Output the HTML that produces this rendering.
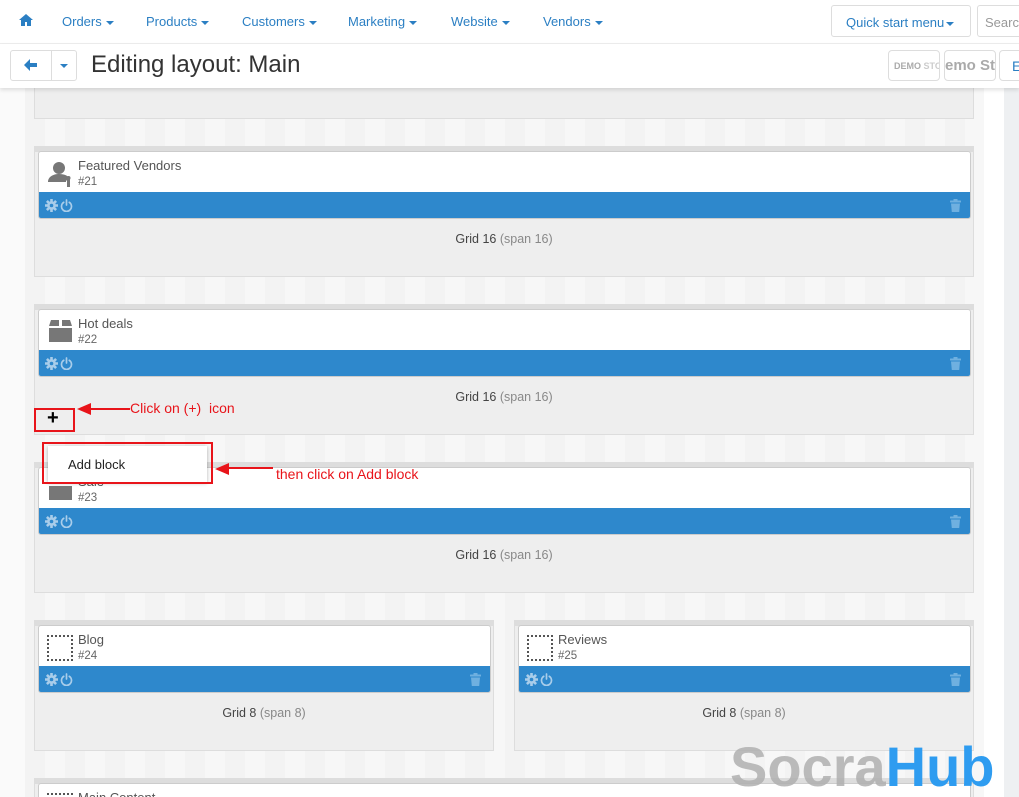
<!DOCTYPE html>
<html><head><meta charset="utf-8"><style>
*{box-sizing:border-box;margin:0;padding:0}
html,body{width:1019px;height:797px;overflow:hidden}
body{background:#fff;font-family:"Liberation Sans",sans-serif;position:relative}
.abs{position:absolute}
.nav{top:0;left:0;width:1019px;height:44px;background:#fff;border-bottom:1px solid #eee}
.nav span{position:absolute;top:14px;font-size:13px;color:#2b7fc3}
.car{display:inline-block;border-left:4px solid transparent;border-right:4px solid transparent;border-top:4px solid #2b7fc3;vertical-align:middle;margin-left:4px}
.bar2{top:44px;left:0;width:1019px;height:44px;background:#fff;box-shadow:0 2px 4px rgba(0,0,0,.12);z-index:3}
.content{top:88px;left:25px;width:959px;height:709px;background:repeating-linear-gradient(90deg,#f3f3f3 0 20px,#f7f7f7 20px 40px)}
.rgray{top:88px;left:1004px;width:15px;height:709px;background:#eef0f2}
.lgray{top:88px;left:0;width:25px;height:709px;background:#fafafa}
.cont{background:#eee;border:1px solid #ddd;border-top:6px solid #ddd}
.blk{background:#fff;border:1px solid #ccc;border-radius:3px;overflow:hidden}
.blk .t{position:absolute;left:39px;top:6px;font-size:13px;color:#555}
.blk .n{position:absolute;left:39px;top:24px;font-size:11.5px;color:#666}
.blue{position:absolute;left:0;right:0;bottom:0;height:26px;background:#2e88cc}
.grid{position:absolute;width:100%;text-align:center;font-size:12.5px;color:#444}
.grid i{font-style:normal;color:#888}
.red{border:2px solid #e8141a;position:absolute}
.ann{color:#e8141a;font-size:14px;position:absolute}
.ic{position:absolute}
</style></head><body>
<svg width="0" height="0" style="position:absolute"><defs>
<g id="gear"><circle cx="6.5" cy="6.5" r="4.3" fill="#a9cdea"/><g stroke="#a9cdea" stroke-width="2.6"><path d="M6.5 0v13M0 6.5h13M1.9 1.9l9.2 9.2M11.1 1.9l-9.2 9.2"/></g><circle cx="6.5" cy="6.5" r="1.8" fill="#2e88cc"/></g>
<g id="pow" fill="none" stroke="#a9cdea" stroke-width="1.7" stroke-linecap="round"><path d="M3.7 3.3A5 5 0 1 0 9.3 3.3"/><path d="M6.5 1v5"/></g>
<g id="trash" fill="#6fb0e0"><rect x="0" y="1.5" width="11" height="2" rx=".5"/><rect x="3.5" y="0" width="4" height="2"/><path d="M1 4.5h9l-.8 8.5H1.8z"/></g>
</defs></svg>
<div class="abs nav">
<svg class="abs" style="left:19px;top:14px" width="14" height="12" viewBox="0 0 14 12"><path d="M7 0L0 6h2v6h4V8h2v4h4V6h2z" fill="#2b7fc3"/></svg>
<span style="left:62px">Orders<i class="car"></i></span>
<span style="left:146px">Products<i class="car"></i></span>
<span style="left:242px">Customers<i class="car"></i></span>
<span style="left:348px">Marketing<i class="car"></i></span>
<span style="left:451px">Website<i class="car"></i></span>
<span style="left:543px">Vendors<i class="car"></i></span>
<div class="abs" style="left:831px;top:5px;width:140px;height:32px;border:1px solid #ddd;border-radius:3px;font-size:13px;color:#2b7fc3;padding:9px 0 0 14px">Quick start menu<i class="car" style="margin-left:2px"></i></div>
<div class="abs" style="left:977px;top:5px;width:60px;height:32px;border:1px solid #ddd;border-radius:3px;font-size:13px;color:#999;padding:9px 0 0 7px">Search</div>
</div>
<div class="abs bar2">
<div class="abs" style="left:10px;top:6px;width:67px;height:31px;border:1px solid #ddd;border-radius:3px"></div>
<div class="abs" style="left:51px;top:6px;width:1px;height:31px;background:#ddd"></div>
<svg class="abs" style="left:24px;top:15px" width="13" height="12" viewBox="0 0 13 12"><path d="M6 0L0 6l6 6V8h7V4H6z" fill="#2b7fc3"/></svg>
<i class="car abs" style="left:56px;top:20px;border-top-color:#2b7fc3"></i>
<div class="abs" style="left:91px;top:7px;font-size:24px;color:#333">Editing layout: Main</div>
<div class="abs" style="left:888px;top:6px;width:52px;height:31px;border:1px solid #ddd;border-radius:4px;font-size:9px;font-weight:bold;color:#aaa;padding:10px 0 0 5px;overflow:hidden;white-space:nowrap">DEMO <span style="color:#ccc">STO</span></div>
<div class="abs" style="left:944px;top:6px;width:52px;height:31px;border:1px solid #ddd;border-radius:4px;font-size:15px;font-weight:bold;color:#aaa;padding:6px 0 0 0;overflow:hidden;white-space:nowrap">emo Sto</div>
<div class="abs" style="left:999px;top:6px;width:30px;height:31px;border:1px solid #ddd;border-radius:4px;font-size:14px;color:#2b7fc3;padding:7px 0 0 12px">E</div>
</div>
<div class="abs lgray"></div>
<div class="abs content"></div>
<div class="abs rgray"></div>

<div class="abs" style="left:34px;top:80px;width:940px;height:39px;background:#eee;border:1px solid #ddd"></div>

<div class="abs cont" style="left:34px;top:146px;width:940px;height:131px"></div>
<div class="abs blk" style="left:38px;top:151px;width:933px;height:68px">
<svg class="abs" style="left:7px;top:8px" width="28" height="28" viewBox="0 0 28 28"><circle cx="13" cy="8" r="6" fill="#777"/><path d="M2 22c0-5 5-8 11-8s9 2 10 4l-3 3v1z" fill="#777"/><rect x="21" y="19" width="3" height="8" fill="#777"/><circle cx="22.5" cy="18" r="2" fill="#777"/></svg>
<div class="t">Featured Vendors</div><div class="n">#21</div><div class="blue"></div></div>
<div class="grid" style="left:34px;width:940px;top:232px">Grid 16 <i>(span 16)</i></div>

<div class="abs cont" style="left:34px;top:304px;width:940px;height:131px"></div>
<div class="abs blk" style="left:38px;top:309px;width:933px;height:68px">
<svg class="abs" style="left:10px;top:10px" width="23" height="22" viewBox="0 0 23 22"><path d="M2 0h8v6H0zM13 0h8l2 6H13z" fill="#777"/><rect x="0" y="8" width="23" height="14" fill="#777"/></svg>
<div class="t">Hot deals</div><div class="n">#22</div><div class="blue"></div></div>
<div class="grid" style="left:34px;width:940px;top:390px">Grid 16 <i>(span 16)</i></div>

<div class="abs cont" style="left:34px;top:462px;width:940px;height:131px"></div>
<div class="abs blk" style="left:38px;top:467px;width:933px;height:68px">
<svg class="abs" style="left:10px;top:10px" width="23" height="22" viewBox="0 0 23 22"><path d="M2 0h8v6H0zM13 0h8l2 6H13z" fill="#777"/><rect x="0" y="8" width="23" height="14" fill="#777"/></svg>
<div class="t">Sale</div><div class="n">#23</div><div class="blue"></div></div>
<div class="grid" style="left:34px;width:940px;top:548px">Grid 16 <i>(span 16)</i></div>

<div class="abs cont" style="left:34px;top:620px;width:460px;height:131px"></div>
<div class="abs blk" style="left:38px;top:625px;width:453px;height:68px">
<div class="abs" style="left:8px;top:9px;width:26px;height:26px;border:2px dotted #555"></div>
<div class="t">Blog</div><div class="n">#24</div><div class="blue"></div></div>
<div class="grid" style="left:34px;width:460px;top:706px">Grid 8 <i>(span 8)</i></div>

<div class="abs cont" style="left:514px;top:620px;width:460px;height:131px"></div>
<div class="abs blk" style="left:518px;top:625px;width:453px;height:68px">
<div class="abs" style="left:8px;top:9px;width:26px;height:26px;border:2px dotted #555"></div>
<div class="t">Reviews</div><div class="n">#25</div><div class="blue"></div></div>
<div class="grid" style="left:514px;width:460px;top:706px">Grid 8 <i>(span 8)</i></div>

<div class="abs cont" style="left:34px;top:778px;width:940px;height:40px"></div>
<div class="abs blk" style="left:38px;top:783px;width:933px;height:30px">
<div class="abs" style="left:8px;top:9px;width:26px;height:26px;border:2px dotted #555"></div>
<div class="t">Main Content</div></div>

<svg class="ic" style="left:45px;top:199px" width="13" height="13"><use href="#gear"/></svg><svg class="ic" style="left:60px;top:199px" width="13" height="13"><use href="#pow"/></svg><svg class="ic" style="left:950px;top:199px" width="11" height="13"><use href="#trash"/></svg>
<svg class="ic" style="left:45px;top:357px" width="13" height="13"><use href="#gear"/></svg><svg class="ic" style="left:60px;top:357px" width="13" height="13"><use href="#pow"/></svg><svg class="ic" style="left:950px;top:357px" width="11" height="13"><use href="#trash"/></svg>
<svg class="ic" style="left:45px;top:515px" width="13" height="13"><use href="#gear"/></svg><svg class="ic" style="left:60px;top:515px" width="13" height="13"><use href="#pow"/></svg><svg class="ic" style="left:950px;top:515px" width="11" height="13"><use href="#trash"/></svg>
<svg class="ic" style="left:45px;top:673px" width="13" height="13"><use href="#gear"/></svg><svg class="ic" style="left:60px;top:673px" width="13" height="13"><use href="#pow"/></svg><svg class="ic" style="left:470px;top:673px" width="11" height="13"><use href="#trash"/></svg>
<svg class="ic" style="left:525px;top:673px" width="13" height="13"><use href="#gear"/></svg><svg class="ic" style="left:540px;top:673px" width="13" height="13"><use href="#pow"/></svg><svg class="ic" style="left:950px;top:673px" width="11" height="13"><use href="#trash"/></svg>

<div class="red" style="left:34px;top:408px;width:41px;height:24px"></div>
<div class="abs" style="left:47px;top:407px;font-size:20px;font-weight:bold;color:#000">+</div>
<svg class="abs" style="left:75px;top:400px" width="55" height="18"><path d="M55 9H14" stroke="#e8141a" stroke-width="2"/><path d="M2 9l14-6v12z" fill="#e8141a"/></svg>
<div class="ann" style="left:130px;top:400px">Click on (+)&nbsp; icon</div>
<div class="abs" style="left:48px;top:446px;width:159px;height:36px;background:#fff;box-shadow:0 1px 4px rgba(0,0,0,.3);font-size:13px;color:#222;padding:11px 0 0 20px">Add block</div>
<div class="red" style="left:42px;top:442px;width:171px;height:42px"></div>
<svg class="abs" style="left:213px;top:460px" width="60" height="18"><path d="M60 8H14" stroke="#e8141a" stroke-width="2"/><path d="M2 9l14-6v12z" fill="#e8141a"/></svg>
<div class="ann" style="left:276px;top:466px">then click on Add block</div>

<div class="abs" style="left:730px;top:732px;font-size:56px;font-weight:bold;letter-spacing:0px;line-height:70px;white-space:nowrap"><span style="color:rgba(175,175,175,.85)">Socra</span><span style="color:#2e9cf0">Hub</span></div>
</body></html>
